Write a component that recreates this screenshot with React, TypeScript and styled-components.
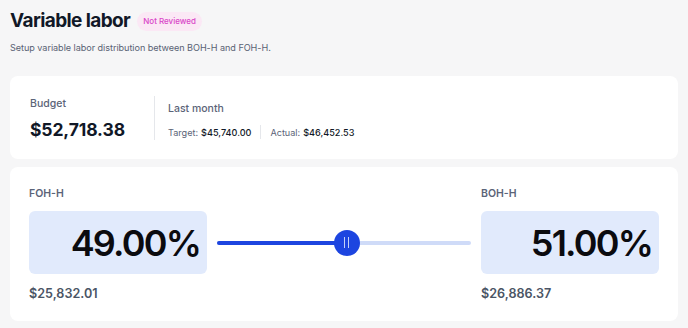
import styled, { createGlobalStyle } from "styled-components";

const GlobalStyle = createGlobalStyle`
	* {
		box-sizing: border-box;
	}

	body {
		margin: 0;
		background: #f6f6f7;
		font-family: Inter, "Liberation Sans", sans-serif;
		color: #111827;
	}
`;

const Page = styled.div`
	padding: 9px 10px 6px;
	width: 688px;
	height: 328px;
	overflow: hidden;
`;

const Header = styled.div`
	display: flex;
	align-items: center;
	gap: 7px;
`;

const Title = styled.h1`
	margin: 0;
	font-size: 19px;
	font-weight: 700;
	letter-spacing: -0.6px;
	line-height: 24px;
	color: #111827;
`;

const Badge = styled.span`
	display: inline-flex;
	align-items: center;
	height: 19px;
	padding: 0 6px;
	border-radius: 10px;
	background: #fbe8f5;
	color: #d946c8;
	font-size: 8px;
	font-weight: 500;
`;

const Subtitle = styled.p`
	margin: 9px 0 0;
	font-size: 9.1px;
	letter-spacing: -0.05px;
	color: #596274;
`;

const Card = styled.div<{ $pad: string; $top?: number }>`
	background: #ffffff;
	border-radius: 8px;
	padding: ${(p) => p.$pad};
	margin-top: ${(p) => p.$top ?? 0}px;
`;

const BudgetRow = styled.div`
	display: flex;
	align-items: stretch;
`;

const BudgetBlock = styled.div`
	width: 125px;
	border-right: 1px solid #e5e7eb;
	padding-top: 1px;
`;

const Label = styled.div`
	font-size: 10.5px;
	font-weight: 500;
	color: #5b6478;
`;

const BigAmount = styled.div`
	margin-top: 9px;
	font-size: 17.5px;
	font-weight: 700;
	letter-spacing: -0.1px;
	color: #111827;
`;

const LastMonth = styled.div`
	padding: 6px 0 0 13px;
`;

const StatsRow = styled.div`
	display: flex;
	align-items: center;
	margin-top: 10px;
	font-size: 9.1px;
`;

const Stat = styled.div`
	color: #5b6478;

	b {
		font-weight: 500;
		color: #111827;
		margin-left: 3px;
	}
`;

const StatDivider = styled.span`
	width: 1px;
	height: 14px;
	background: #e5e7eb;
	margin: 0 9px;
`;

const SplitRow = styled.div`
	display: flex;
	align-items: flex-start;
`;

const Side = styled.div`
	width: 178px;
	flex-shrink: 0;
`;

const SideLabel = styled.div`
	font-size: 10.5px;
	font-weight: 600;
	color: #5b6478;
	height: 24px;
`;

const PercentBox = styled.div`
	height: 63px;
	border-radius: 6px;
	background: #e1eafc;
	display: flex;
	align-items: center;
	justify-content: flex-end;
	padding-right: 7px;
	font-size: 36px;
	font-weight: 600;
	letter-spacing: -1.8px;
	color: #0b0b0f;
`;

const SideAmount = styled.div`
	margin-top: 12px;
	font-size: 12.6px;
	font-weight: 600;
	color: #4b5565;
`;

const SliderWrap = styled.div`
	flex: 1;
	height: 63px;
	margin: 24px 10px 0;
	position: relative;
	display: flex;
	align-items: center;
`;

const Track = styled.div`
	width: 100%;
	height: 4px;
	border-radius: 2px;
	background: #cfdbf8;
	position: relative;
`;

const Fill = styled.div`
	position: absolute;
	left: 0;
	top: 0;
	height: 100%;
	border-radius: 2px;
	background: #1d45e0;
`;

const Thumb = styled.div`
	position: absolute;
	top: 50%;
	width: 26px;
	height: 26px;
	margin: -13px 0 0 -13px;
	border-radius: 50%;
	background: #1d45e0;
	display: flex;
	align-items: center;
	justify-content: center;
	gap: 2.5px;

	span {
		width: 1.5px;
		height: 11px;
		background: #c3d1f8;
	}
`;

const Slider = ({ value }: { value: number }) => (
	<SliderWrap>
		<Track>
			<Fill style={{ width: `${value}%` }} />
			<Thumb style={{ left: `${value}%` }}>
				<span />
				<span />
			</Thumb>
		</Track>
	</SliderWrap>
);

const App = () => {
	const foh = 51;

	return (
		<>
			<GlobalStyle />
			<Page>
				<Header>
					<Title>Variable labor</Title>
					<Badge>Not Reviewed</Badge>
				</Header>
				<Subtitle>Setup variable labor distribution between BOH-H and FOH-H.</Subtitle>

				<Card $pad="20px 20px 19px" $top={23}>
					<BudgetRow>
						<BudgetBlock>
							<Label>Budget</Label>
							<BigAmount>$52,718.38</BigAmount>
						</BudgetBlock>
						<LastMonth>
							<Label>Last month</Label>
							<StatsRow>
								<Stat>
									Target:<b>$45,740.00</b>
								</Stat>
								<StatDivider />
								<Stat>
									Actual:<b>$46,452.53</b>
								</Stat>
							</StatsRow>
						</LastMonth>
					</BudgetRow>
				</Card>

				<Card $pad="20px 19px 20px 19px" $top={8}>
					<SplitRow>
						<Side>
							<SideLabel>FOH-H</SideLabel>
							<PercentBox>49.00%</PercentBox>
							<SideAmount>$25,832.01</SideAmount>
						</Side>
						<Slider value={foh} />
						<Side>
							<SideLabel>BOH-H</SideLabel>
							<PercentBox>51.00%</PercentBox>
							<SideAmount>$26,886.37</SideAmount>
						</Side>
					</SplitRow>
				</Card>
			</Page>
		</>
	);
};

export default App;
